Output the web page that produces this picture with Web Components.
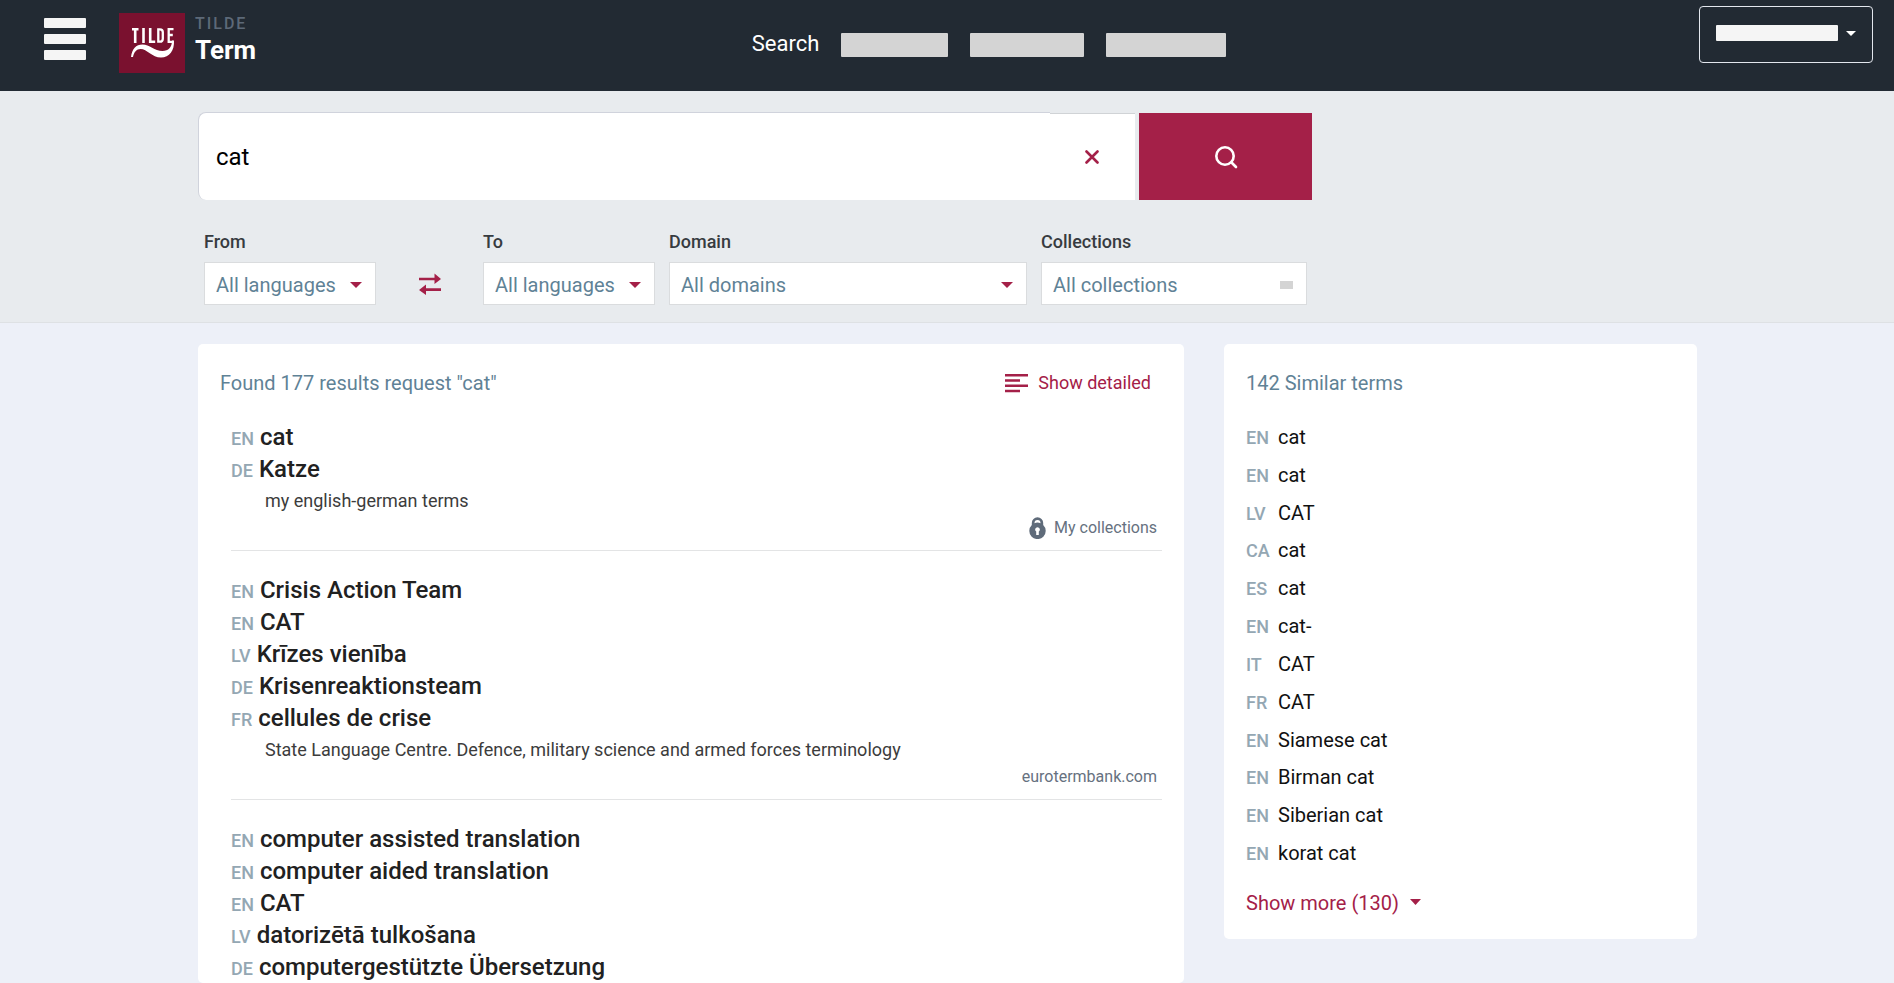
<!DOCTYPE html>
<html lang="en">
<head>
<meta charset="utf-8">
<meta name="viewport" content="width=device-width, initial-scale=1">
<title>Tilde Term</title>
<style>
:root{--accent:#a42048;--slate:#5f8296;--code:#94a7b3;--muted:#667180}
body{margin:0;background:#edf0f8;font-family:Roboto,sans-serif;font-size:20px;line-height:24px;color:#212121}
</style>
</head>
<body>
<term-header></term-header>
<search-panel>
  <filter-select slot="from" label="From" value="All languages"></filter-select>
  <filter-select slot="to" label="To" value="All languages"></filter-select>
  <filter-select slot="domain" label="Domain" value="All domains"></filter-select>
  <filter-select slot="collections" label="Collections" value="All collections" plain></filter-select>
</search-panel>
<page-columns>
  <results-panel heading='Found 177 results request "cat"'>
    <result-entry source="My collections" locked>
      <term-line code="EN">cat</term-line>
      <term-line code="DE">Katze</term-line>
      <span slot="note">my english-german terms</span>
    </result-entry>
    <result-entry source="eurotermbank.com">
      <term-line code="EN">Crisis Action Team</term-line>
      <term-line code="EN">CAT</term-line>
      <term-line code="LV">Krīzes vienība</term-line>
      <term-line code="DE">Krisenreaktionsteam</term-line>
      <term-line code="FR">cellules de crise</term-line>
      <span slot="note">State Language Centre. Defence, military science and armed forces terminology</span>
    </result-entry>
    <result-entry>
      <term-line code="EN">computer assisted translation</term-line>
      <term-line code="EN">computer aided translation</term-line>
      <term-line code="EN">CAT</term-line>
      <term-line code="LV">datorizētā tulkošana</term-line>
      <term-line code="DE">computergestützte Übersetzung</term-line>
    </result-entry>
  </results-panel>
  <similar-terms slot="side" heading="142 Similar terms">
    <similar-term code="EN">cat</similar-term>
    <similar-term code="EN">cat</similar-term>
    <similar-term code="LV">CAT</similar-term>
    <similar-term code="CA">cat</similar-term>
    <similar-term code="ES">cat</similar-term>
    <similar-term code="EN">cat-</similar-term>
    <similar-term code="IT">CAT</similar-term>
    <similar-term code="FR">CAT</similar-term>
    <similar-term code="EN">Siamese cat</similar-term>
    <similar-term code="EN">Birman cat</similar-term>
    <similar-term code="EN">Siberian cat</similar-term>
    <similar-term code="EN">korat cat</similar-term>
  </similar-terms>
</page-columns>
<script>
const base = `<style>*{box-sizing:border-box}button{font:inherit;color:inherit;background:none;border:0;padding:0;cursor:pointer}a{color:inherit;text-decoration:none}svg{display:block;flex:none}</style>`;
const define = (name, render) => customElements.define(name, class extends HTMLElement {
  constructor() {
    super();
    this.attachShadow({mode: 'open'}).innerHTML = base + render(this);
  }
});
const attr = (el, name) => (el.getAttribute(name) || '').replace(/"/g, '&quot;');

define('term-header', () => `<style>
:host{display:block;background:#222a33;color:#fff}
header{display:grid;grid-template-columns:1fr auto 1fr;height:91px}
.left{display:flex;align-items:flex-start;padding-left:44px}
.menu{display:grid;gap:6px;margin-top:18px;width:42px}
.menu i{height:10px;background:#f5f5f5;border-radius:1px}
.brand{display:flex;gap:10px;margin:13px 0 0 33px}
.name{display:grid;align-content:start;font-weight:500}
.name small{font-size:16px;line-height:22px;color:#5d6978;letter-spacing:2px}
.name b{font-size:26px;line-height:30px;font-weight:700}
nav{display:flex;align-items:center;gap:22px;margin:0 0 2px 84px;font-size:22px}
nav a:first-child{padding-bottom:2px}
nav a+a{height:24px;background:#d4d4d4;border-radius:1px}
.a{width:107px}.b{width:114px}.c{width:120px}
.right{display:flex;justify-content:flex-end;align-items:flex-start;padding:6px 21px 0 0}
.user{display:flex;align-items:center;gap:8px;width:174px;height:57px;padding:0 16px 3px;border:1px solid #e3e7ee;border-radius:4px}
.user i{width:122px;height:16px;background:#f5f5f5;border-radius:1px}
</style>
<header>
<div class="left"><button class="menu" aria-label="Menu"><i></i><i></i><i></i></button>
<a class="brand" href="#"><svg width="66" height="60" viewBox="0 0 66 60" aria-hidden="true"><path fill="#7a112f" d="M0 0h66v60H0z"/><g fill="none" stroke="#fff" stroke-width="2.6"><path d="M13 16.2h6.5M16.2 15v15M24.5 15v15M31.2 15v13.8h5"/><path d="M39.3 16.3v12.4h1.6c2 0 2.9-1 2.9-3v-6.4c0-2-.9-3-2.900-3zM54.500 16.200h-4.800v12.600h4.600M50 22h3.800" stroke-width="2.300"/></g><path fill="#fff" d="M12 44c1-8 5-12.500 11.500-12.500 7 0 12 6.500 20 6.500 6 0 9.500-4 9.500-10.500h2c.5 10-4.500 17-13 17-9 0-14-8.500-20.500-8.500-4 0-6.500 3.200-7.500 8z"/></svg>
<span class="name"><small>TILDE</small><b>Term</b></span></a></div>
<nav aria-label="Main"><a href="#">Search</a><a class="a" href="#" aria-label="Section one"></a><a class="b" href="#" aria-label="Section two"></a><a class="c" href="#" aria-label="Section three"></a></nav>
<div class="right"><button class="user" aria-label="Account"><i></i><svg width="10" height="5" viewBox="0 0 10 5"><path fill="#fff" d="M0 0h10L5 5z"/></svg></button></div>
</header>`);

define('filter-select', el => `<style>
:host{display:block}
label{display:block;font-size:18px;font-weight:500;line-height:20px;color:#373b40;margin-bottom:10px}
.box{display:grid;align-items:center}
.box>*{grid-area:1/1}
select{appearance:none;width:100%;height:43px;padding:2px 34px 0 11px;border:1px solid #dadcde;border-radius:0;background:#fff;color:var(--slate);font:20px Roboto,sans-serif}
svg,i{justify-self:end;margin:2px 14px 0 0;pointer-events:none}
i{width:13px;height:8px;background:#d4d4d4}
</style>
<label for="s">${attr(el,'label')}</label>
<div class="box"><select id="s"><option>${attr(el,'value')}</option></select>${el.hasAttribute('plain') ? '<i></i>' : '<svg width="12" height="6" viewBox="0 0 12 6"><path fill="var(--accent)" d="M0 0h12L6 6z"/></svg>'}</div>`);

define('search-panel', () => `<style>
:host{display:block;background:#e8ebee;border-bottom:1px solid #dee1e4}
.wrap{max-width:1500px;margin:auto;padding:21px 0 17px 1px}
form{display:flex;align-items:flex-end;max-width:1114px}
input{flex:1;min-width:0;height:88px;padding:0 0 0 17px;border:1px solid #d0d3dc;border-width:1px 0 0 1px;border-radius:8px 0 0 8px;background:#fff;font:24px Roboto,sans-serif;color:#000;outline:0}
.clear{display:grid;place-items:center;width:85px;height:87px;padding-right:2px;background:#fff;border-top:1px solid #d0d3d6}
.go{display:grid;place-items:center;width:173px;height:87px;margin-left:4px;background:var(--accent)}
.filters{display:grid;grid-template-columns:172px 79px 172px minmax(0,1fr) 266px;column-gap:14px;align-items:end;max-width:1109px;padding:32px 0 0 6px}
.swap{height:43px;display:grid;place-items:center}
</style>
<div class="wrap"><form onsubmit="return false"><input type="text" value="cat" aria-label="Search term">
<button class="clear" type="button" aria-label="Clear"><svg width="14" height="14" viewBox="0 0 14 14"><path d="M1.500 1.500l11 11m0-11l-11 11" stroke="#a42048" stroke-width="2.600" stroke-linecap="round"/></svg></button>
<button class="go" aria-label="Search"><svg width="24" height="24" viewBox="0 0 24 24" fill="none" stroke="#fff" stroke-width="2.600" stroke-linecap="round"><circle cx="11" cy="11" r="8.700"/><path d="M17.500 17.500l4.500 4.500"/></svg></button></form>
<div class="filters"><slot name="from"></slot><button class="swap" aria-label="Swap languages"><svg width="22" height="22" viewBox="0 0 22 22"><path fill="#a42048" d="M0 4.700h15.500V.5L22 6l-6.500 5V7.300H0zM22 15.300H7v-3.800L0 17l7 5v-4h15z"/></svg></button><slot name="to"></slot><slot name="domain"></slot><slot name="collections"></slot></div></div>`);

define('page-columns', () => `<style>
:host{display:block}
main{box-sizing:border-box;display:grid;grid-template-columns:minmax(0,1fr) 473px;column-gap:40px;align-items:start;max-width:1500px;margin:auto;padding:21px 0 0 1px}
</style><main><slot></slot><slot name="side"></slot></main>`);

define('results-panel', el => `<style>
:host{display:block;background:#fff;border-radius:5px;padding:27px 22px 0}
.top{display:flex;justify-content:space-between;align-items:center;padding-right:11px;margin-bottom:22px}
h1{margin:0;font-size:20px;font-weight:400;line-height:24px;color:var(--slate)}
button{display:flex;align-items:center;gap:10px;font-size:18px;color:var(--accent)}
</style>
<div class="top"><h1>${attr(el,'heading')}</h1><button><svg width="23" height="20" viewBox="0 0 23 20"><path fill="#a42048" d="M0 1h23v2.500H0zM0 6.200h15v2.500H0zM0 11.500h23V14H0zM0 16.700h15v2.500H0z"/></svg>Show detailed</button></div>
<slot></slot>`);

define('result-entry', el => `<style>
:host{display:block;margin-left:11px;padding-top:4px;margin-bottom:19px;border-bottom:1px solid #e3e4e5}
:host(:last-child){border-bottom:0;margin-bottom:0}
.note{padding-left:34px;font-size:18px;line-height:32px;color:#3c3c3c}
.source{display:flex;justify-content:flex-end;align-items:center;gap:8px;padding:0 5px 11px 0;font-size:16px;line-height:22px;color:var(--muted)}
</style><slot></slot>
${el.hasAttribute('source') ? `<div class="note"><slot name="note"></slot></div><div class="source">${el.hasAttribute('locked') ? '<svg width="17" height="22" viewBox="0 0 17 22"><path fill="#5f6b7a" fill-rule="evenodd" d="M2.800 8V6a5.700 5.700 0 0 1 11.400 0v2A8.200 8.200 0 1 1 2.800 8zM5.500 6v.2q3-1.200 6 0V6a3 3 0 0 0-6 0zM8.500 10.200a2.300 2.300 0 0 0-1.300 4.200V18h2.600v-3.600a2.300 2.300 0 0 0-1.300-4.200z"/></svg>' : ''}<span>${attr(el,'source')}</span></div>` : ''}`);

define('term-line', el => `<style>
:host{display:flex;align-items:baseline;gap:6px;font-size:24px;line-height:32px;font-weight:500;color:#212121}
span{font-size:18px;line-height:20px;color:var(--code)}
</style><span>${attr(el,'code')}</span><div><slot></slot></div>`);

define('similar-terms', el => `<style>
:host{display:block;background:#fff;border-radius:5px;padding:27px 22px 24px}
h2{margin:0 0 30px;font-size:20px;font-weight:400;line-height:24px;color:var(--slate)}
.list{display:grid;grid-auto-rows:1fr;min-height:454px}
button{display:flex;align-items:center;gap:11px;margin-top:12px;color:var(--accent);line-height:24px}
svg{margin-bottom:2px}
</style><h2>${attr(el,'heading')}</h2><div class="list"><slot></slot></div>
<button>Show more (130)<svg width="11" height="6" viewBox="0 0 11 6"><path fill="#a42048" d="M0 0h11L5.500 6z"/></svg></button>`);

define('similar-term', el => `<style>
:host{display:block}
a{display:grid;grid-template-columns:32px 1fr;align-items:baseline;color:#111}
span{font-size:18px;font-weight:500;color:var(--code)}
</style><a href="#"><span>${attr(el,'code')}</span><div><slot></slot></div></a>`);
</script>
</body>
</html>
